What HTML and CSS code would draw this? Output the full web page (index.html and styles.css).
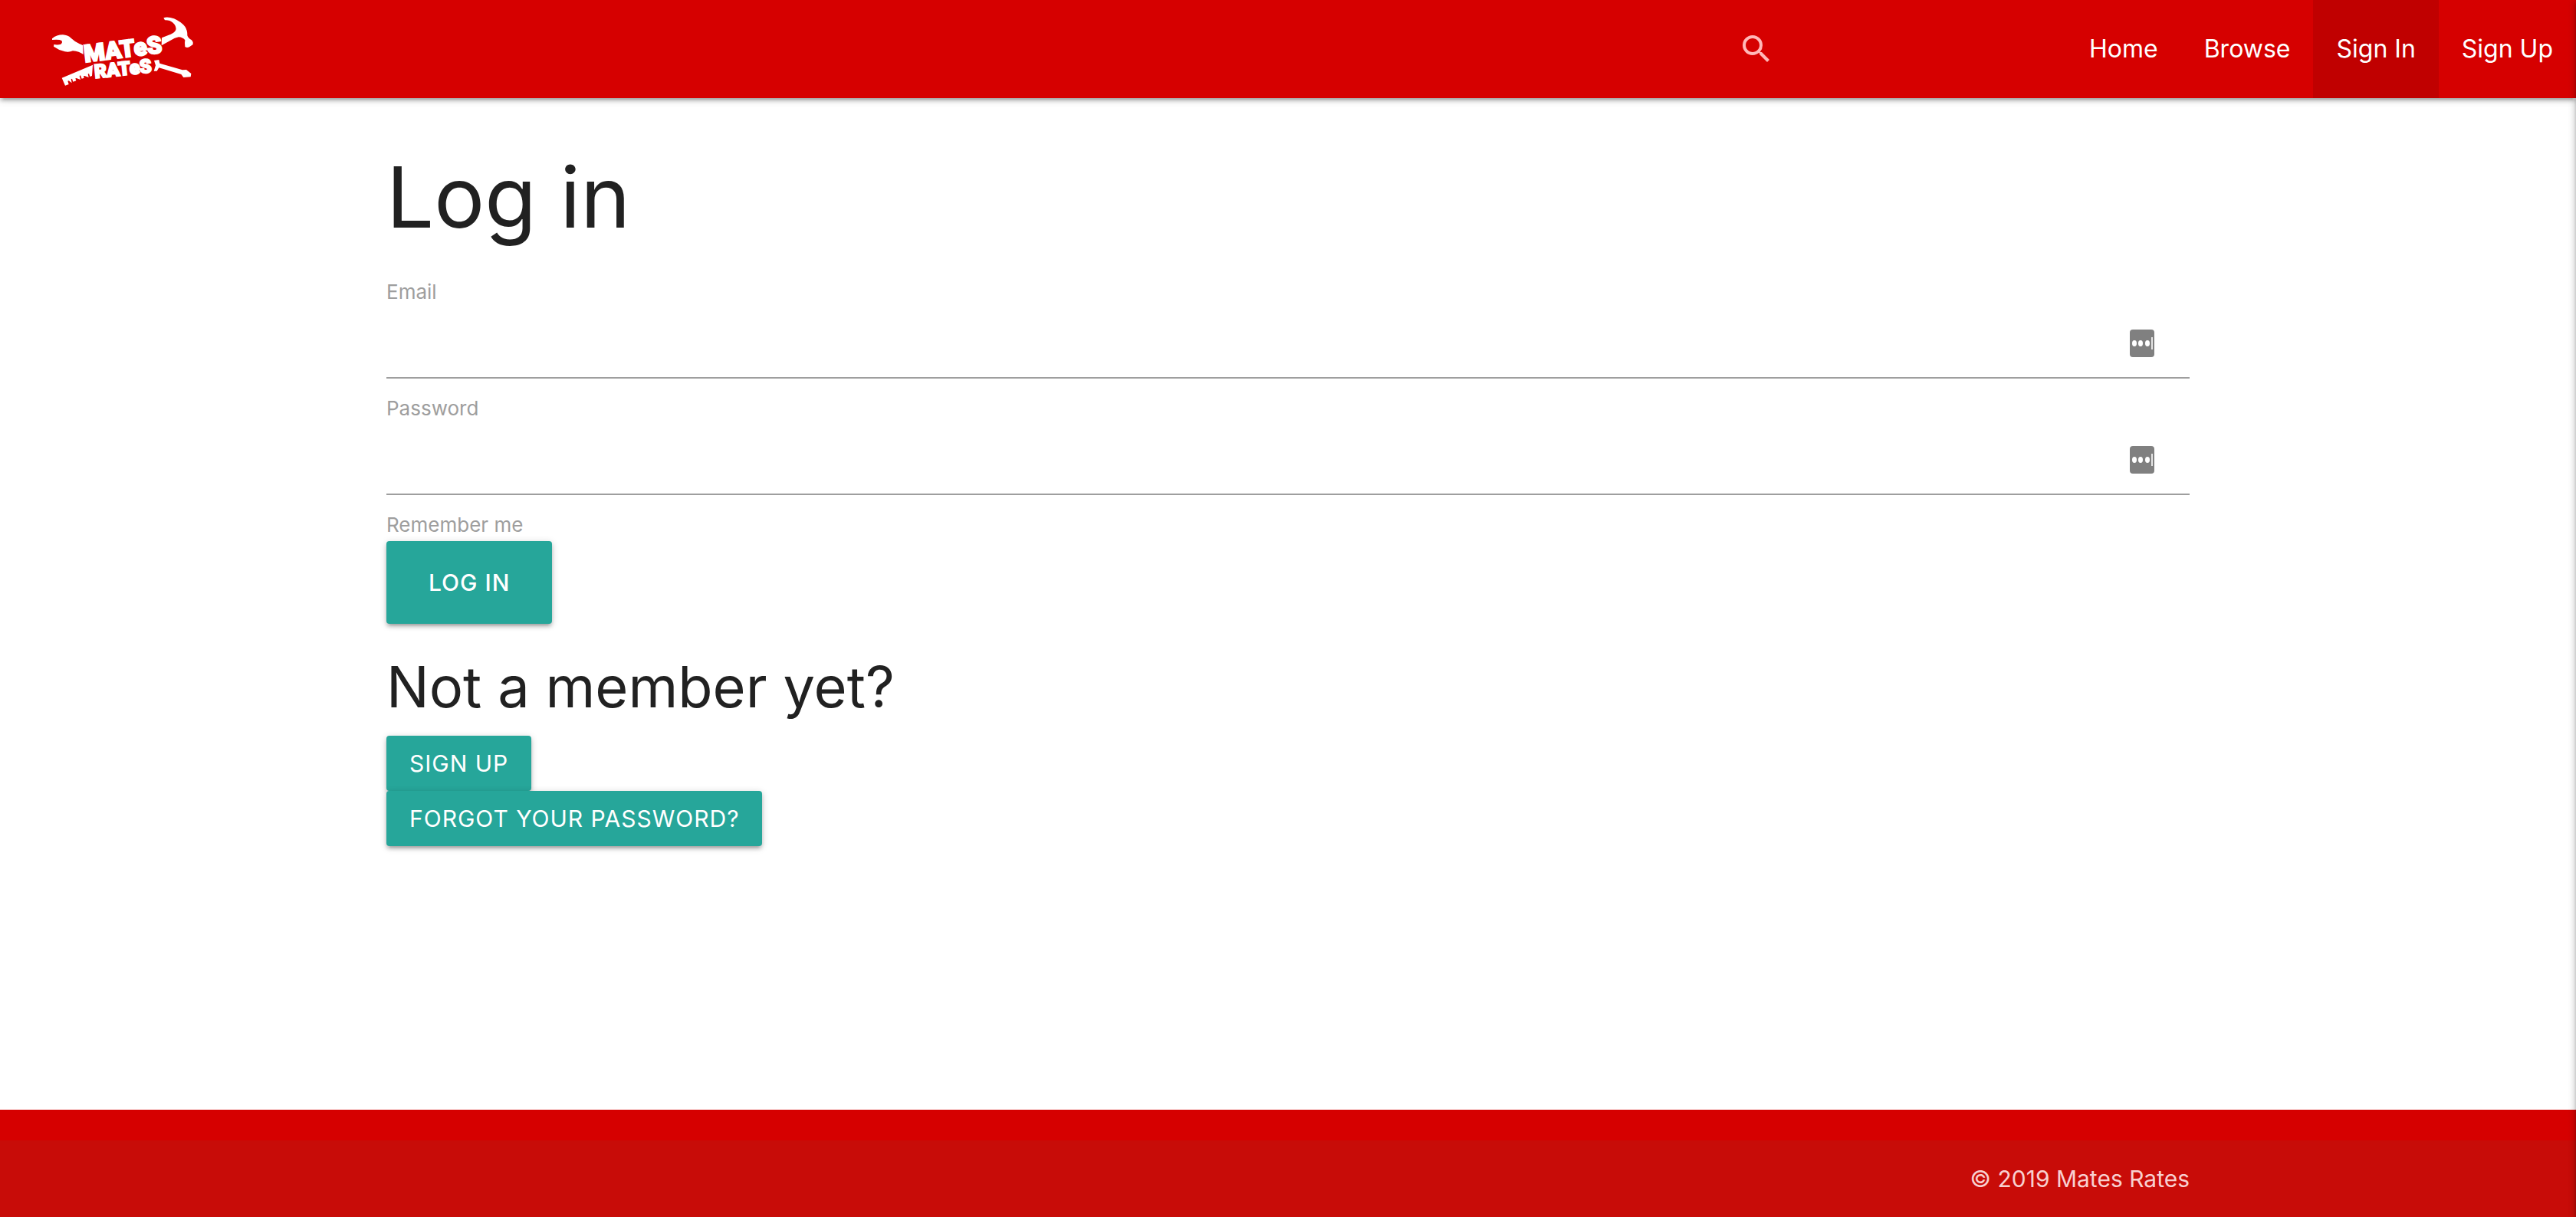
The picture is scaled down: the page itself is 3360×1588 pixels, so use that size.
FILE: index.html
```html
<!DOCTYPE html>
<html lang="en">
<head>
<meta charset="utf-8">
<meta name="viewport" content="width=device-width, initial-scale=1">
<title>Log in</title>
<link rel="stylesheet" href="styles.css">
</head>
<body>
<header class="navbar">
  <a class="brand" href="#" aria-label="Mates Rates">
    <svg class="brand-logo" viewBox="0 0 720 384" fill="#fff" aria-hidden="true">
      <path d="M84 151Q101 136 126 136Q145 137 158 149Q174 164 190 171L204 177L206 213Q190 201 165 199Q151 205 134 202Q109 196 90 182L91 174Q106 177 118 173Q126 167 121 159Q112 153 84 156Z"/>
      <path d="M520 70Q535 64 561 73Q588 85 604 104Q614 119 613 139Q616 150 630 157Q637 164 635 174L622 183Q612 189 604 183Q602 168 604 157Q595 146 579 145Q563 148 550 157L512 178L513 148L548 134Q563 128 568 117Q571 102 557 89Q544 78 525 79Z"/>
      <path d="M122 305L243 254L240 297L232 300L228 288L224 290L227 303L211 297L207 298L209 305L200 308L195 295L191 297L195 312L179 306L175 307L178 316L166 320L162 308L158 310L161 325L149 316L145 317L149 330L135 335Z"/>
      <path d="M483 237L502 234L505 248L594 274L609 273L628 288L626 301L598 303L589 291L502 265L494 278L482 278L489 256Z"/>
      <text class="logo-line logo-top" transform="rotate(-7 216 242)" x="212" y="243">MATeS</text>
      <text class="logo-line logo-bottom" transform="rotate(-6 254 306)" x="252" y="306">RATeS</text>
    </svg>
  </a>
  <form class="search" role="search">
    <label class="search-label" for="search" aria-label="Search">
      <svg class="search-icon" viewBox="0 0 24 24" aria-hidden="true"><path d="M15.5 14h-.79l-.28-.27A6.47 6.47 0 0 0 16 9.5 6.5 6.5 0 1 0 9.5 16c1.61 0 3.09-.59 4.23-1.57l.27.28v.79l5 4.99L20.49 19l-4.99-5zm-6 0C7.01 14 5 11.99 5 9.5S7.01 5 9.5 5 14 7.01 14 9.5 11.99 14 9.5 14z"/></svg>
    </label>
    <input class="search-input" id="search" type="search">
  </form>
  <nav class="links">
    <a class="link" href="#">Home</a>
    <a class="link" href="#">Browse</a>
    <a class="link link-active" href="#">Sign In</a>
    <a class="link" href="#">Sign Up</a>
  </nav>
</header>

<main class="container content">
  <h2 class="title">Log in</h2>
  <form class="login">
    <label class="label" for="email">Email</label>
    <div class="field">
      <input class="input" id="email" type="email">
      <svg class="key" viewBox="0 0 32 36" aria-hidden="true"><rect width="32" height="36" rx="4" fill="#808080"/><g fill="#fff"><ellipse cx="6" cy="18" rx="3" ry="4"/><ellipse cx="14" cy="18" rx="3" ry="4"/><ellipse cx="23" cy="18" rx="3" ry="4"/><path d="M28 10h2v16h-2z" opacity=".8"/></g></svg>
    </div>
    <label class="label" for="password">Password</label>
    <div class="field">
      <input class="input" id="password" type="password">
      <svg class="key" viewBox="0 0 32 36" aria-hidden="true"><rect width="32" height="36" rx="4" fill="#808080"/><g fill="#fff"><ellipse cx="6" cy="18" rx="3" ry="4"/><ellipse cx="14" cy="18" rx="3" ry="4"/><ellipse cx="23" cy="18" rx="3" ry="4"/><path d="M28 10h2v16h-2z" opacity=".8"/></g></svg>
    </div>
    <span class="label">Remember me</span>
    <button class="btn btn-large" type="submit">Log in</button>
  </form>
  <h3 class="subtitle">Not a member yet?</h3>
  <div class="actions">
    <a class="btn" href="#">Sign up</a>
    <a class="btn" href="#">Forgot your password?</a>
  </div>
</main>

<footer class="footer">
  <div class="copyright">
    <div class="container copyright-text">© 2019 Mates Rates</div>
  </div>
</footer>
<div class="drawer" aria-hidden="true"></div>
</body>
</html>
```
FILE: styles.css
```css
* {
  box-sizing: border-box;
}

body {
  margin: 0;
  min-height: 100vh;
  display: flex;
  flex-direction: column;
  background: #fff;
  color: #212121;
  font-family: Inter, "Open Sans", sans-serif;
  font-size: 30px;
  line-height: 44px;
}

a {
  color: inherit;
  text-decoration: none;
}

.container {
  width: 70%;
  margin: 0 auto;
}

/* Top bar */
.navbar {
  display: flex;
  align-items: stretch;
  height: 128px;
  padding-left: 40px;
  background: #d60000;
  color: #fff;
  box-shadow: 0 4px 4px rgba(0, 0, 0, .14), 0 6px 2px -4px rgba(0, 0, 0, .12), 0 2px 10px rgba(0, 0, 0, .2);
}

.brand-logo {
  display: block;
  width: 240px;
  height: 128px;
}

.logo-line {
  font-family: Roboto, sans-serif;
  font-weight: 900;
  stroke: #fff;
  stroke-width: 6px;
}

.logo-top {
  font-size: 94px;
}

.logo-bottom {
  font-size: 74px;
}

.search {
  display: flex;
  align-items: center;
  width: 428px;
  margin-left: auto;
}

.search-label,
.search-icon {
  display: block;
  width: 48px;
  height: 48px;
}

.search-icon {
  fill: #ffb8b8;
}

.search-input {
  flex: 1;
  min-width: 0;
  height: 128px;
  border: 0;
  outline: 0;
  background: transparent;
  color: inherit;
  font: inherit;
}

.links {
  display: flex;
}

.link {
  padding: 0 30px;
  font-size: 32px;
  line-height: 128px;
}

.link-active {
  background: #c00000;
}

/* Page content */
.content {
  flex: 1;
}

.title {
  margin: 70px 0 42px;
  font-size: 110px;
  font-weight: 400;
  line-height: 118px;
}

.login {
  display: flex;
  flex-direction: column;
  align-items: flex-start;
}

.label {
  padding-top: 2px;
  color: #9e9e9e;
  font-size: 26px;
  line-height: 42px;
}

.field {
  position: relative;
  width: 100%;
  margin-bottom: 16px;
}

.input {
  display: block;
  width: 100%;
  height: 92px;
  padding: 0 92px 0 0;
  border: 0;
  border-bottom: 2px solid #9e9e9e;
  outline: 0;
  background: transparent;
  color: inherit;
  font: inherit;
}

.key {
  position: absolute;
  top: 28px;
  right: 46px;
  width: 32px;
  height: 36px;
}

.btn {
  padding: 0 30px;
  border: 0;
  border-radius: 4px;
  background: #26a69a;
  color: #fff;
  box-shadow: 0 4px 4px rgba(0, 0, 0, .14), 0 6px 2px -4px rgba(0, 0, 0, .12), 0 2px 10px rgba(0, 0, 0, .2);
  font-family: inherit;
  font-size: 30px;
  letter-spacing: 1px;
  line-height: 72px;
  text-transform: uppercase;
}

.btn-large {
  padding: 0 55px;
  font-weight: 500;
  line-height: 108px;
}

.subtitle {
  margin: 42px 0 24px;
  font-size: 74px;
  font-weight: 400;
  line-height: 80px;
}

.actions {
  display: flex;
  flex-direction: column;
  align-items: flex-start;
}

/* Footer */
.footer {
  padding-top: 40px;
  background: #d60000;
}

.copyright {
  background: #c80c08;
  color: #f8d0d0;
  line-height: 100px;
}

.copyright-text {
  text-align: right;
}

/* Closed side menu: only its shadow shows at the window's edge */
.drawer {
  position: fixed;
  top: 0;
  bottom: 0;
  left: 100%;
  width: 600px;
  box-shadow: 0 4px 4px rgba(0, 0, 0, .14), 0 2px 10px rgba(0, 0, 0, .3);
}
```
